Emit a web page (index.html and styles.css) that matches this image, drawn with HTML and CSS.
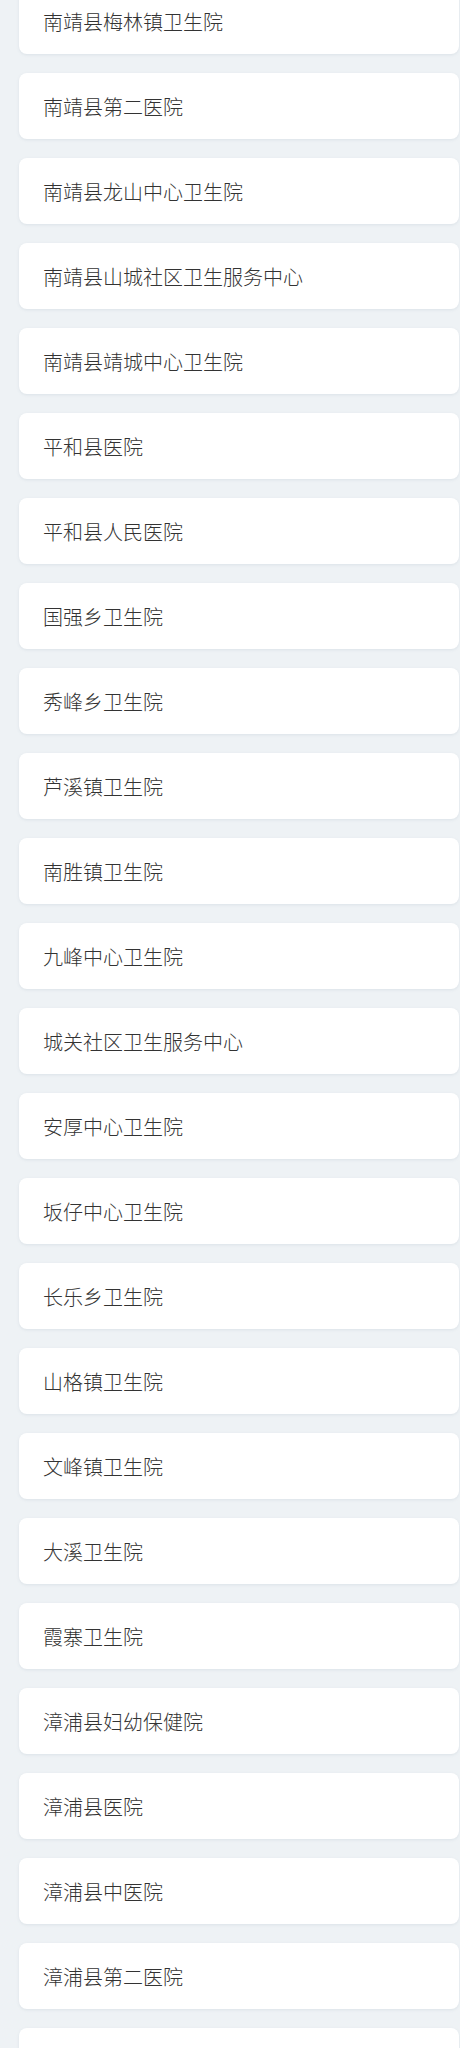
FILE: index.html
```html
<!DOCTYPE html>
<html lang="zh-CN">
<head>
<meta charset="utf-8">
<link rel="stylesheet" href="styles.css">
</head>
<body>
<ul class="list">
<li class="card">南靖县梅林镇卫生院</li>
<li class="card">南靖县第二医院</li>
<li class="card">南靖县龙山中心卫生院</li>
<li class="card">南靖县山城社区卫生服务中心</li>
<li class="card">南靖县靖城中心卫生院</li>
<li class="card">平和县医院</li>
<li class="card">平和县人民医院</li>
<li class="card">国强乡卫生院</li>
<li class="card">秀峰乡卫生院</li>
<li class="card">芦溪镇卫生院</li>
<li class="card">南胜镇卫生院</li>
<li class="card">九峰中心卫生院</li>
<li class="card">城关社区卫生服务中心</li>
<li class="card">安厚中心卫生院</li>
<li class="card">坂仔中心卫生院</li>
<li class="card">长乐乡卫生院</li>
<li class="card">山格镇卫生院</li>
<li class="card">文峰镇卫生院</li>
<li class="card">大溪卫生院</li>
<li class="card">霞寨卫生院</li>
<li class="card">漳浦县妇幼保健院</li>
<li class="card">漳浦县医院</li>
<li class="card">漳浦县中医院</li>
<li class="card">漳浦县第二医院</li>
<li class="card"></li>
</ul>
</body>
</html>
```
FILE: styles.css
```css
html, body {
  margin: 0;
  padding: 0;
  background: #eef2f5;
}
body {
  font-family: "Noto Sans CJK SC", "Noto Sans", sans-serif;
  color: #333333;
  overflow: hidden;
}
.list {
  list-style: none;
  margin: -12px 1px 0 19px;
  padding: 0;
  display: flex;
  flex-direction: column;
  gap: 19px;
}
.card {
  height: 66px;
  box-sizing: border-box;
  padding: 2px 24px 0;
  display: flex;
  align-items: center;
  background: #ffffff;
  border-radius: 8px;
  box-shadow: 0 1px 3px rgba(120, 140, 160, 0.15);
  font-size: 20px;
  line-height: 1;
  font-weight: 300;
}
```
